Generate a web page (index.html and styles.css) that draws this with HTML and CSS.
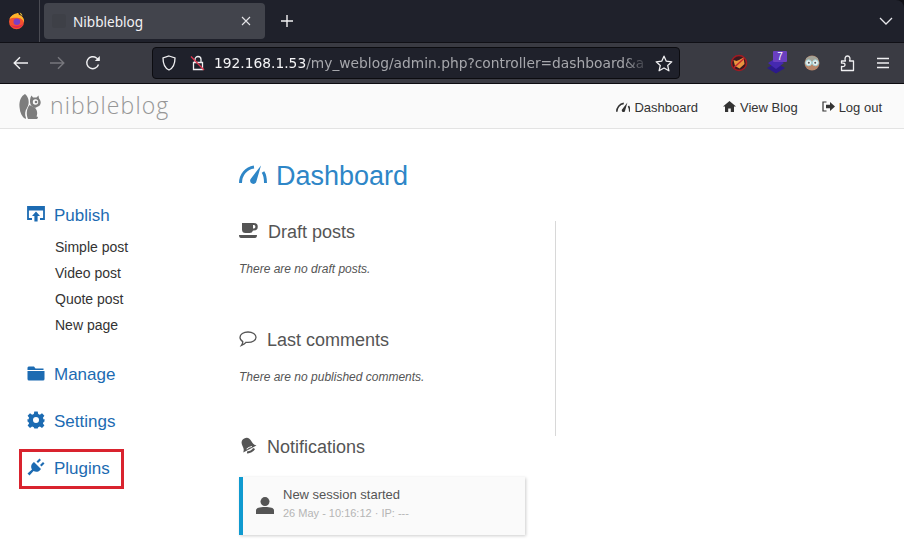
FILE: index.html
```html
<!DOCTYPE html>
<html lang="en">
<head>
    <meta charset="UTF-8">
    <meta name="viewport" content="width=device-width, initial-scale=1.0">
    <title>Nibbleblog</title>
    <link rel="stylesheet" href="styles.css">
</head>
<body>
  <!-- browser chrome -->
  <div class="tabbar">
    <div class="fx-box">
      <svg width="18" height="18" viewBox="0 0 18 18">
        <circle cx="8.5" cy="9.8" r="7.5" fill="#f4512f"/>
        <path d="M1.5 7 C3 3 8 1 10.5 1 C10.3 2 11 3 12 3.2 C15 4.5 16.6 7.5 16 10.5 C15 7.5 13 6 10.5 6 C7 5.5 3 6 1.5 7 Z" fill="#fdb52b"/>
        <path d="M13 3 L11.5 0.5 C13 1 14 2 14.5 4 Z" fill="#ffcf3a"/>
        <circle cx="8.8" cy="9.8" r="3.3" fill="#7a3fc4"/>
        <path d="M2.5 13 C6 17 12 17 15.5 12 C12 14 7 14.5 2.5 13 Z" fill="#e22850"/>
      </svg>
    </div>
    <div class="tab">
      <span class="tab-icon"></span>
      <span class="tab-title">Nibbleblog</span>
      <svg class="tab-close" width="10" height="10" viewBox="0 0 10 10"><path d="M1 1 L9 9 M9 1 L1 9" stroke="#e4e4e8" stroke-width="1.1"/></svg>
    </div>
    <svg class="new-tab" width="14" height="14" viewBox="0 0 14 14"><path d="M7 1 V13 M1 7 H13" stroke="#f2f2f4" stroke-width="1.4"/></svg>
    <svg class="tabs-down" width="14" height="8" viewBox="0 0 14 8"><path d="M1 1 L7 7 L13 1" fill="none" stroke="#e8e8ec" stroke-width="1.3"/></svg>
  </div>

  <div class="toolbar">
    <svg class="nav-icon" width="16" height="14" viewBox="0 0 16 14"><path d="M15 7 H1.5 M7 1.2 L1.2 7 L7 12.8" fill="none" stroke="#f0f0f2" stroke-width="1.4"/></svg>
    <svg class="nav-icon fwd" width="16" height="14" viewBox="0 0 16 14"><path d="M1 7 H14.5 M9 1.2 L14.8 7 L9 12.8" fill="none" stroke="#77777d" stroke-width="1.4"/></svg>
    <svg class="nav-icon reload" width="16" height="16" viewBox="0 0 16 16"><path d="M13.5 9.5 A6 6 0 1 1 11.5 3 L14 5" fill="none" stroke="#f0f0f2" stroke-width="1.4"/><path d="M14.8 1 V6 H9.8 Z" fill="#f0f0f2"/></svg>
    <div class="urlbar">
      <svg class="shield" width="16" height="16" viewBox="0 0 16 16"><path d="M8 1 L14 3 C14 9 12.5 13 8 15 C3.5 13 2 9 2 3 Z" fill="none" stroke="#f0f0f2" stroke-width="1.3"/></svg>
      <svg class="lock" width="16" height="16" viewBox="0 0 16 16"><path d="M5 7 V4.5 A3 3 0 0 1 11 4.5 V7 M3.5 7.5 H12.5 V14.5 H3.5 Z" fill="none" stroke="#f0f0f2" stroke-width="1.3"/><path d="M1 1.5 L14 15" stroke="#e0364f" stroke-width="1.3"/></svg>
      <div class="url"><span class="host">192.168.1.53</span>/my_weblog/admin.php?controller=dashboard&amp;a</div>
      <svg class="star" width="18" height="17" viewBox="0 0 18 17"><path d="M9 1.2 L11.3 6.2 L16.8 6.8 L12.7 10.4 L13.9 15.8 L9 13 L4.1 15.8 L5.3 10.4 L1.2 6.8 L6.7 6.2 Z" fill="none" stroke="#f0f0f2" stroke-width="1.3" stroke-linejoin="round"/></svg>
    </div>
    <div class="addons">
      <svg class="addon-fox" width="18" height="18" viewBox="0 0 18 18">
        <circle cx="9" cy="9" r="7.5" fill="#3a1a20" stroke="#a11a22" stroke-width="1.5"/>
        <path d="M3.5 6 L6.5 7 L9 6 L13.5 3.5 L14.5 10 L9.5 14.5 L5 12 Z" fill="#e8953e"/>
        <path d="M4 13.5 L14 4.5" stroke="#c6262e" stroke-width="1.4"/>
      </svg>
      <div class="addon-stack">
        <svg width="20" height="22" viewBox="0 0 20 22"><path d="M9 11 L18 16 L9 21.5 L0 16 Z" fill="#2c1a8c"/><path d="M9 6 L17 11 L9 17 L1 11 Z" fill="#4529b0"/></svg>
        <span class="badge">7</span>
      </div>
      <svg class="addon-face" width="18" height="18" viewBox="0 0 18 18">
        <circle cx="9" cy="9" r="7.5" fill="#b9876a"/>
        <path d="M3 4.5 C6 1 12 1 15 4.5 L15 6.5 H3 Z" fill="#a3a398"/>
        <circle cx="5.6" cy="8.8" r="3" fill="#e8f2f2" stroke="#9fd0d4"/>
        <circle cx="12.4" cy="8.8" r="3" fill="#e8f2f2" stroke="#9fd0d4"/>
        <circle cx="5.8" cy="8.8" r="1" fill="#555"/>
        <circle cx="12.2" cy="8.8" r="1" fill="#555"/>
      </svg>
      <svg class="addon-puzzle" width="16" height="18" viewBox="0 0 16 18"><path d="M1.5 7 H5.5 C4.5 5 5 2 7.5 2 C10 2 10.5 5 9.5 7 H13.5 V16.5 H1.5 V12.5 C4 13 5 12 5 10.8 C5 9.5 4 8.8 1.5 9.2 Z" fill="none" stroke="#f0f0f2" stroke-width="1.3" stroke-linejoin="round"/></svg>
      <svg class="addon-menu" width="14" height="12" viewBox="0 0 14 12"><path d="M1 1.5 H13 M1 6 H13 M1 10.5 H13" stroke="#f0f0f2" stroke-width="1.3"/></svg>
    </div>
  </div>

  <!-- page -->
  <header class="top">
    <div class="logo">
      <svg width="22" height="25" viewBox="0 0 22 25">
        <path d="M6 0 C2 2 0 7 0.5 13 C1 19 3 23 6.5 25 L7 24 C5.5 20 6 17 8 14 C9.5 11.5 10 9 9.5 6 C9 3.5 8 1.5 6 0 Z" fill="#7d7d7d"/>
        <path d="M10.5 11 C7.5 15 7 20 9 25 H17 C19.5 25 19.5 22.5 17.5 22.5 C19 19 18 15.5 15.5 13.5 Z" fill="#7d7d7d"/>
        <path d="M11.5 3.5 L12.5 1.5 L14 3.5 H17.5 L19.5 1.5 L20 4.5 C22.5 7 22 10.5 20 12 L16 14 C13 13 11 11 11 8 C11 6.5 11 5 11.5 3.5 Z" fill="#7d7d7d"/>
        <circle cx="16.5" cy="8" r="2.7" fill="#fafafa"/>
        <circle cx="17" cy="8" r="1.3" fill="#7d7d7d"/>
      </svg>
      <span class="logo-text">nibbleblog</span>
    </div>
    <nav class="top-nav">
      <a href="#"><svg width="14" height="10" viewBox="0 0 27 18"><path d="M1.5 18 C1.5 10 7 3 15 2 M24 7 C26 10 26.5 14 26.5 18" fill="none" stroke="#333" stroke-width="3"/><path d="M22 0.5 L17.5 16 A3.2 3.2 0 1 1 12 13.5 Z" fill="#333"/></svg>Dashboard</a>
      <a href="#"><svg width="13" height="11" viewBox="0 0 13 11"><path d="M6.5 0 L13 5.6 H11 V11 H7.8 V7.5 H5.2 V11 H2 V5.6 H0 Z" fill="#333"/></svg>View Blog</a>
      <a class="logout" href="#"><svg width="13" height="11" viewBox="0 0 13 11"><path d="M4.5 1 H1 V10 H4.5" fill="none" stroke="#333" stroke-width="1.2"/><path d="M4 3.8 H8 V1 L13 5.5 L8 10 V7.2 H4 Z" fill="#333"/></svg>Log out</a>
    </nav>
  </header>

  <div class="layout">
    <aside class="sidebar">
      <div class="side-group">
        <a class="side-title" href="#">
          <svg width="18" height="16" viewBox="0 0 18 16"><path d="M5 13 H1 V1 H17 V13 H13" fill="none" stroke="#1c6bb2" stroke-width="1.8"/><path d="M1 2 H17 V4.5 H1 Z" fill="#1c6bb2"/><path d="M9 5.5 L13 10 H10.6 V15.5 H7.4 V10 H5 Z" fill="#1c6bb2"/></svg>
          Publish
        </a>
        <ul class="side-list">
          <li>Simple post</li>
          <li>Video post</li>
          <li>Quote post</li>
          <li>New page</li>
        </ul>
      </div>
      <a class="side-title" href="#">
        <svg width="18" height="15" viewBox="0 0 18 15"><path d="M1.5 0.5 H7 L8.5 2.5 H16.5 V4 H0.5 V1.5 Z M0.5 5 H17.5 V13 Q17.5 14.5 16 14.5 H2 Q0.5 14.5 0.5 13 Z" fill="#1c6bb2"/></svg>
        Manage
      </a>
      <a class="side-title" href="#">
        <svg width="18" height="18" viewBox="0 0 18 18"><path fill-rule="evenodd" d="M7.3 0.5 H10.7 L11.2 3 L12.9 3.7 L15 2.3 L17.4 4.7 L15.9 6.8 L16.6 8.4 L17.5 8 V10.5 L16.6 11.1 L15.9 12.5 L17.4 14.6 L15 17 L12.9 15.6 L11.2 16.3 L10.7 17.5 H7.3 L6.8 16.3 L5.1 15.6 L3 17 L0.6 14.6 L2.1 12.5 L1.4 11.1 L0.5 10.5 V8 L1.4 8.4 L2.1 6.8 L0.6 4.7 L3 2.3 L5.1 3.7 L6.8 3 Z M9 6 A3 3 0 1 0 9 12 A3 3 0 1 0 9 6 Z" fill="#1c6bb2"/></svg>
        Settings
      </a>
      <a class="side-title plugins" href="#">
        <svg width="18" height="18" viewBox="0 0 18 18"><path d="M7 4 L14 11 C12 14 9 14.5 6.5 13 L2.5 17.5 L0.5 15.5 L5 11.5 C3.5 9 4 6 7 4 Z M9.5 3.5 L12.5 0.5 L14 2 L11 5 Z M13 7 L16 4 L17.5 5.5 L14.5 8.5 Z" fill="#1c6bb2"/></svg>
        Plugins
      </a>
    </aside>

    <main class="main">
      <h1 class="page-title">
        <svg width="28" height="19" viewBox="0 0 28 19"><path d="M1.5 18 C1.5 10 7 3 15 2 M24 7 C26 10 26.5 14 26.5 18" fill="none" stroke="#2e86c7" stroke-width="3"/><path d="M22 0.5 L17.5 16 A3.2 3.2 0 1 1 12 13.5 Z" fill="#2e86c7"/></svg>
        Dashboard
      </h1>
      <div class="columns">
        <div class="left-col">
          <section class="block">
            <h2 class="block-title">
              <svg class="ico-cup" width="19" height="15" viewBox="0 0 19 15"><path d="M3 0 H15 A3.5 3.5 0 0 1 15 7.5 H14 A3.5 3.5 0 0 1 10.5 10 H6.5 A3.5 3.5 0 0 1 3 6.5 Z M14 2 V5.5 H15 A1.8 1.8 0 0 0 15 2 Z M0 12 H18 Q18 15 16 15 H2 Q0 15 0 12 Z" fill="#555" fill-rule="evenodd"/></svg>
              Draft posts
            </h2>
            <p class="empty">There are no draft posts.</p>
          </section>
          <section class="block second">
            <h2 class="block-title">
              <svg class="ico-chat" width="18" height="16" viewBox="0 0 18 16"><path d="M9 1 C13.5 1 17 3.2 17 6.2 C17 9.2 13.5 11.4 9 11.4 C8.2 11.4 7.6 11.4 7 11.3 C6 12.6 4.5 13.6 2.5 14.4 C3.4 13.2 3.8 12 3.8 10.6 C2 9.6 1 8 1 6.2 C1 3.2 4.5 1 9 1 Z" fill="none" stroke="#555" stroke-width="1.3"/></svg>
              Last comments
            </h2>
            <p class="empty">There are no published comments.</p>
          </section>
          <section class="block last">
            <h2 class="block-title bell-title">
              <svg class="ico-bell" width="18" height="17" viewBox="0 0 18 17"><g transform="rotate(-28 9 8.5)"><path d="M9 0.5 C5.5 0.5 4 3 4 6 C4 9 3.5 10.5 1.5 12.5 H16.5 C14.5 10.5 14 9 14 6 C14 3 12.5 0.5 9 0.5 Z" fill="#555"/><path d="M5 14 C7 15.5 11 15.5 13 14" fill="none" stroke="#555" stroke-width="2.2"/><path d="M6 11.2 C8 10.4 10 10.4 12 11.2" fill="none" stroke="#fff" stroke-width="1"/></g></svg>
              Notifications
            </h2>
            <div class="note">
              <svg width="18" height="17" viewBox="0 0 18 17"><circle cx="9" cy="4.6" r="4.5" fill="#555"/><path d="M0 17 V13.5 C0 11 3 10 9 10 C15 10 18 11 18 13.5 V17 Z" fill="#555"/></svg>
              <div>
                <div class="note-title">New session started</div>
                <div class="note-meta">26 May - 10:16:12 · IP: ---</div>
              </div>
            </div>
          </section>
        </div>
        <div class="divider"></div>
      </div>
    </main>
  </div>
</body>
</html>
```

FILE: styles.css
```css
* {
  box-sizing: border-box;
}
html, body {
  height: 539px;
  overflow: hidden;
}
body {
  margin: 0;
  background-color: #101016;
  font-family: "Liberation Sans", Arial, sans-serif;
  color: #333;
}
a {
  text-decoration: none;
}

/* browser chrome */
.tabbar {
  height: 43px;
  background-color: #1f212b;
  display: flex;
  align-items: center;
  border-bottom: 1px solid #101016;
  border-top-right-radius: 8px;
}
.fx-box {
  width: 40px;
  height: 42px;
  display: flex;
  align-items: center;
  justify-content: center;
  padding-right: 6px;
  border-right: 1px solid #4a4b53;
}
.tab {
  width: 221px;
  height: 36px;
  margin-left: 4px;
  padding: 0 14px 0 8px;
  background-color: #42444c;
  border-radius: 4px;
  display: flex;
  align-items: center;
  color: #f2f2f4;
  font-family: "Noto Sans", sans-serif;
  font-size: 13.6px;
}
.tab-icon {
  width: 14px;
  height: 14px;
  margin-right: 7px;
  background-color: #3e4047;
  border-radius: 3px;
}
.tab-close {
  margin-left: auto;
}
.new-tab {
  margin-left: 15px;
}
.tabs-down {
  margin-left: auto;
  margin-right: 11px;
}
.toolbar {
  height: 41px;
  background-color: #3a3b43;
  border-bottom: 1px solid #0c0c10;
  display: flex;
  align-items: center;
  padding-left: 13px;
}
.nav-icon {
  margin-right: 20px;
}
.reload {
  margin-right: 0;
}
.urlbar {
  width: 528px;
  height: 32px;
  margin-left: 51px;
  padding: 0 6px 0 8px;
  background-color: #1f212b;
  border: 1px solid #0c0c10;
  border-radius: 4px;
  display: flex;
  align-items: center;
}
.lock {
  margin-left: 13px;
  flex: none;
}
.shield, .star {
  flex: none;
}
.url {
  flex: 1;
  min-width: 0;
  margin: 0 5px 0 8px;
  white-space: nowrap;
  color: #a6a7ac;
  font-family: "DejaVu Sans", sans-serif;
  font-size: 13.8px;
  -webkit-mask-image: linear-gradient(to right, #000 94%, transparent);
  mask-image: linear-gradient(to right, #000 94%, transparent);
}
.host {
  color: #f4f4f6;
}
.addons {
  display: flex;
  align-items: center;
  margin-left: 50px;
}
.addon-stack {
  position: relative;
  width: 20px;
  height: 22px;
  margin-left: 19px;
  margin-top: 0;
}
.addon-stack svg {
  display: block;
}
.addon-face {
  margin-left: 16px;
}
.addon-puzzle {
  margin-left: 19px;
}
.addon-menu {
  margin-left: 20px;
}
.badge {
  position: absolute;
  top: -1px;
  left: 6px;
  width: 14px;
  height: 11px;
  background-color: #6a3fc0;
  border-radius: 1px;
  color: #fff;
  font-size: 10px;
  line-height: 11px;
  text-align: center;
}

/* page header */
.top {
  height: 45px;
  background-color: #fafafa;
  border-bottom: 1px solid #e3e3e3;
  display: flex;
  align-items: center;
  justify-content: space-between;
  padding: 0 22px 0 19px;
}
.logo {
  display: flex;
  align-items: center;
  gap: 9px;
}
.logo-text {
  margin-top: -2px;
  color: #969696;
  font-family: "Open Sans", sans-serif;
  font-weight: 300;
  font-size: 23px;
  letter-spacing: 1.1px;
}
.top-nav {
  display: flex;
  gap: 25px;
  padding-top: 2px;
}
.top-nav a {
  color: #333;
  font-size: 13px;
}
.top-nav svg {
  margin-right: 4px;
}
.top-nav .logout {
  margin-left: -1px;
}

/* layout */
.layout {
  display: flex;
  height: 411px;
  background-color: #fff;
}
.sidebar {
  width: 239px;
  padding: 77px 0 0 27px;
}
.side-group {
  margin-bottom: 27px;
}
.side-title {
  display: flex;
  align-items: center;
  gap: 9px;
  height: 20px;
  margin-bottom: 27px;
  color: #1c6bb2;
  font-size: 17px;
}
.side-group .side-title {
  margin-bottom: 8px;
}
.side-title svg {
  flex: none;
  margin-top: -4px;
}
.plugins {
  width: 99px;
  height: 34px;
  margin: -7px 0 0 -5px;
  padding-left: 5px;
  outline: 3px solid #d9232e;
}
.side-list {
  list-style: none;
  margin: 0;
  padding: 0 0 0 28px;
  color: #333;
  font-size: 14px;
  line-height: 26px;
}

.main {
  flex: 1;
}
.page-title {
  display: flex;
  align-items: center;
  gap: 9px;
  margin: 30px 0 28px;
  height: 34px;
  color: #2e86c7;
  font-size: 27px;
  font-weight: 400;
}
.page-title svg {
  margin-top: -4px;
}
.columns {
  display: flex;
}
.left-col {
  width: 316px;
  height: 215px;
}
.divider {
  width: 1px;
  height: 215px;
  background-color: #d8d8d8;
}
.block {
  height: 108px;
}
.block.second {
  height: 107px;
}
.block-title {
  display: flex;
  align-items: center;
  gap: 10px;
  margin: 0 0 19px;
  height: 22px;
  color: #555;
  font-size: 18px;
  font-weight: 400;
}
.block-title svg {
  margin-top: -3px;
}
.bell-title {
  gap: 10px;
}
.empty {
  margin: 0;
  color: #555;
  font-size: 12px;
  font-style: italic;
}
.note {
  width: 286px;
  height: 58px;
  margin-top: 17px;
  padding-left: 13px;
  padding-bottom: 6px;
  background-color: #fafafa;
  border-left: 4px solid #0f9ad0;
  box-shadow: 1px 1px 3px rgba(0, 0, 0, 0.2);
  display: flex;
  align-items: center;
  gap: 9px;
}
.note svg {
  margin-top: 5px;
}
.note-title {
  margin-bottom: 5px;
  color: #555;
  font-size: 13px;
}
.note-meta {
  color: #b5b5b5;
  font-size: 11px;
}
```
